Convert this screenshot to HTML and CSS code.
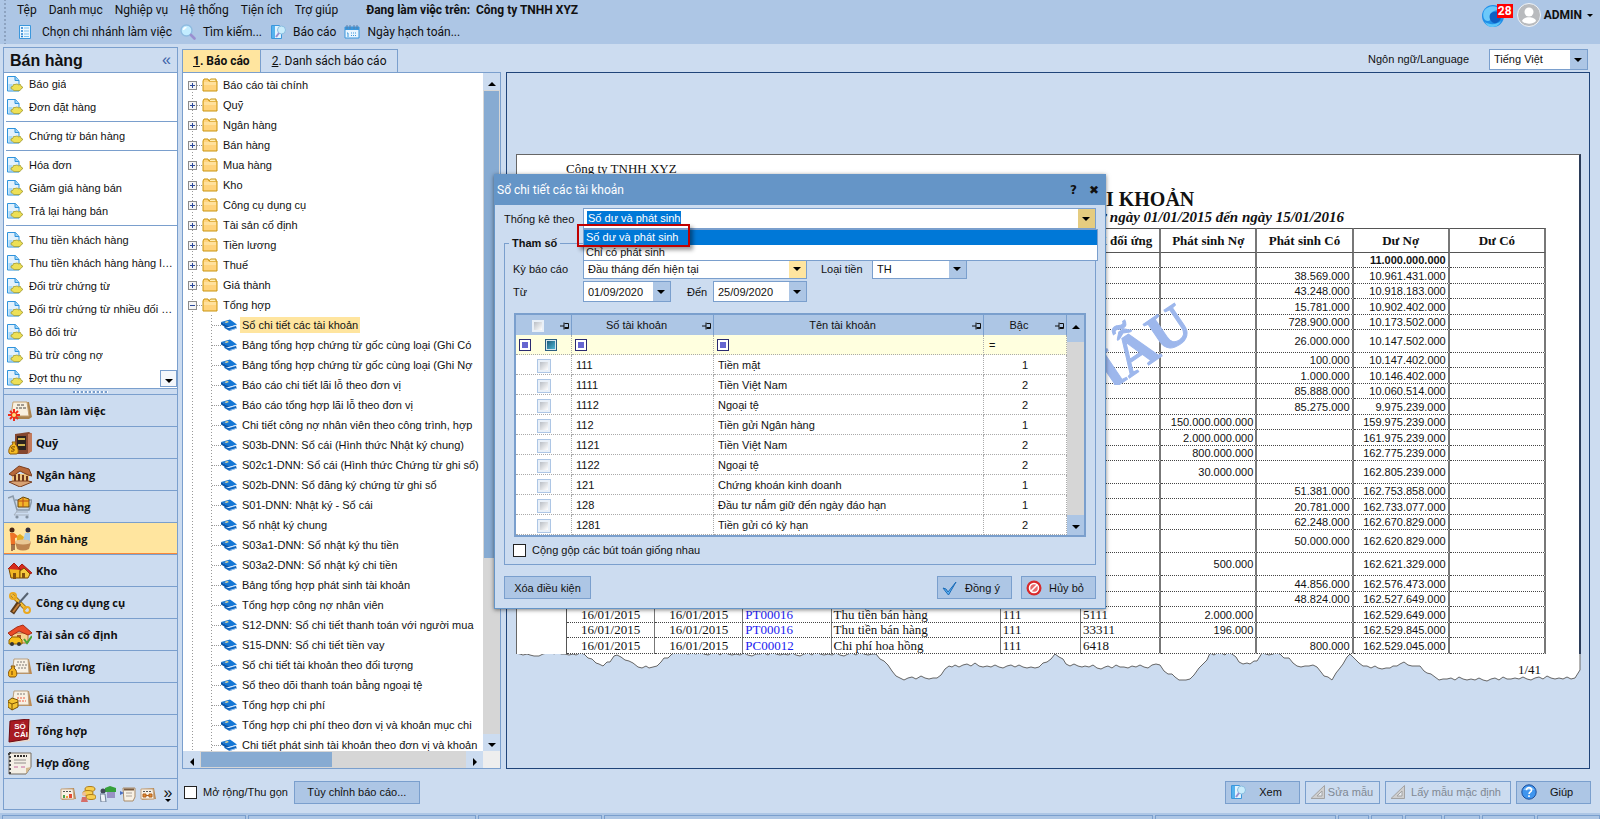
FILE: index.html
```html
<!DOCTYPE html>
<html lang="vi">
<head>
  <meta charset="UTF-8">
  <meta name="viewport" content="width=device-width, initial-scale=1">
  <title>Báo cáo - Công ty TNHH XYZ</title>
  <link rel="stylesheet" href="styles.css">
</head>
<body>

  <!-- icons -->
  <svg class="sprite" aria-hidden="true">
    <symbol id="i-list" viewBox="0 0 16 16"><path d="M2.500 1.500h11v13h-11z" fill="#eaf6ff" stroke="#3b97dc"/><path d="M4 4h2M4 7h2M4 10h2M4 12.500h2" stroke="#1f7fd0" stroke-width="1.500"/><path d="M7 4h5M7 7h5M7 10h5M7 12.500h5" stroke="#7cc1f0"/></symbol>
    <symbol id="i-search" viewBox="0 0 16 16"><circle cx="6.500" cy="6.500" r="5.500" fill="#c2ecff" stroke="#8fbbe0" stroke-width="1.400"/><path d="M3.500 6a3 3 0 0 1 3-2.500" stroke="#fff" stroke-width="1.500" fill="none"/><path d="M11 11l3.500 3.500" stroke="#9a8fd0" stroke-width="2.600" stroke-linecap="round"/></symbol>
    <symbol id="i-report" viewBox="0 0 16 16"><path d="M1.500 1.500h8l2 2v11h-10z" fill="#e2f4ff" stroke="#3b97dc"/><path d="M2 2h3v12H2z" fill="#55b2ee"/><circle cx="11.500" cy="6" r="4" fill="#c9ecfb" stroke="#8abde0"/><path d="M9 9l-3 4" stroke="#9a8fd0" stroke-width="2"/></symbol>
    <symbol id="i-cal" viewBox="0 0 16 16"><path d="M1 3h14v11H1z" fill="#eaf6ff" stroke="#3b97dc"/><path d="M1 3h14v3H1z" fill="#3b97dc"/><path d="M3 1v4M6 1v4M10 1v4M13 1v4" stroke="#5c7fa8"/><path d="M3 9h1v4M7 9h1m1 0h1m1 0h1M7 11.500h1m1 0h1m1 0h1" stroke="#3b97dc" fill="none"/></symbol>
    <symbol id="i-doc" viewBox="0 0 16 16"><path d="M.500.500h8l3.500 4v10.500H.500z" fill="#e2f1fd" stroke="#2f93dc"/><path d="M8 .500v4h4" fill="#9ad2f7" stroke="#2f93dc"/><path d="M1.500 8h4v6h-4z" fill="#a9d8f7"/><path d="M4 11l2-.800.500-1.700h1.500L10 8l1.500.800 2-.300.500 1.700 1.700.800-.700 1.500-1.500.800-.500 1.300H7l-1.500-1.300-1.300-.500z" fill="#ede056" stroke="#a39a2c" stroke-width=".800"/></symbol>
    <symbol id="i-folder" viewBox="0 0 16 14"><path d="M1 3l1-2h4l1 2h8v10H1z" fill="#ffd37c" stroke="#c9940e"/><path d="M7 3l1.500-2H14v2" fill="#fff0b8" stroke="#c9940e"/><path d="M2 4h12v3H2z" fill="#ffe09c"/></symbol>
    <symbol id="i-book" viewBox="0 0 16 12"><path d="M0 3L9 .500l7 5L8 8z" fill="#1477d6"/><path d="M0 3v2.500L4 8l4 0v-.500z" fill="#0a56a8"/><path d="M8 8l7.500-2v1L9 9z" fill="#cfe6fb"/><path d="M3 7.500l5 1.500 7-2 .800 2.500L8.500 12 3.500 9z" fill="#0f66c0"/><path d="M8.500 11l7-2v.800l-7 2z" fill="#bcdcf8"/><path d="M3.500 3l3-.900L8 3l-3 1z" fill="#f0dc93"/></symbol>
    <symbol id="i-pin" viewBox="0 0 10 8"><path d="M0 4h4M4 .500v7M4.500 1.500h4v5h-4M4.500 5.500h4" stroke="#111" fill="none"/></symbol>
    <symbol id="i-check" viewBox="0 0 16 14"><path d="M1 7l3 1 2 3 8-10-7.500 13L4 11z" fill="#5cb0f2" stroke="#1c6cb8"/></symbol>
    <symbol id="i-stop" viewBox="0 0 16 16"><circle cx="8" cy="8" r="7.500" fill="#d8292b"/><circle cx="8" cy="8" r="4.500" fill="#e9696b" stroke="#fff" stroke-width="1.500"/><path d="M5 11l6-6" stroke="#fff" stroke-width="1.600"/></symbol>
    <symbol id="i-ruler" viewBox="0 0 16 16"><path d="M1 14.500L14.500 1.500v13z" fill="#cfcfcf" stroke="#a3a3a3"/><path d="M7 12l5-5v5z" fill="#e8edf3" stroke="#a3a3a3"/></symbol>
    <symbol id="i-help" viewBox="0 0 16 16"><circle cx="8" cy="8" r="7.200" fill="#3f95ee" stroke="#1c4f9c"/><path d="M2.500 6a6 5 0 0 1 11 0z" fill="#85c0f8"/><path d="M5.500 6.200c0-3.600 5.200-3.200 5 0 0 1.800-2.400 1.800-2.400 3.800M8 11.300v1.700" stroke="#fff" stroke-width="1.600" fill="none"/></symbol>
    <symbol id="i-globe" viewBox="0 0 22 22"><circle cx="11" cy="11" r="11" fill="#1f8fe8"/><path d="M2 6c4-6 13-6 16-1-5 0-8 1-9 4s1 7-3 7-6-5-4-10z" fill="#6cc9fa"/><path d="M9 8c4-2 9-2 10 2s-3 9-7 8-6-7-3-10z" fill="#0f5fc2"/><path d="M3 17c4 3 12 3 16-1-2 5-6 6-9 6s-6-2-7-5z" fill="#5cc6fa"/></symbol>
    <symbol id="i-user" viewBox="0 0 24 24"><circle cx="12" cy="12" r="11.500" fill="#b9bbbe" stroke="#eef3f9"/><circle cx="12" cy="9" r="4.500" fill="#fff"/><path d="M5 18c1-5 13-5 14 0-3 3.500-11 3.500-14 0z" fill="#fff"/></symbol>

    <symbol id="n-desk" viewBox="0 0 24 24"><path d="M7 3h14l3 15-3 2H5z" fill="#a9834f"/><path d="M5 3h14l2 14H3z" fill="#f8f0df" stroke="#c5a170"/><path d="M9 6h7M8 9h2m1 0h3m1 0h3" stroke="#4b4540" stroke-dasharray="3 1"/><path d="M6 10v12M0 16h12M2 12l8 8M10 12l-8 8" stroke="#ef2d19" stroke-width="2"/><circle cx="6" cy="16" r="2" fill="#ffdf7a"/></symbol>
    <symbol id="n-safe" viewBox="0 0 24 24"><path d="M7 3l14-2 3 2v17l-5 3H7z" fill="#85472f"/><path d="M20 3l4-1v18l-4 3z" fill="#c37a5b"/><path d="M9 5h9v14H9z" fill="#2d2320"/><path d="M10 8h7M10 14h7" stroke="#cfb34d" stroke-width="2"/><path d="M4 11h4l-1 2c3 2 5 10 1 10H2c-3-2 0-9 3-10z" fill="#f6bb22" stroke="#8f5c0a"/><path d="M7 16c-5-1-4 2-2 2s2 3-2 2" stroke="#6c3a00" fill="none"/></symbol>
    <symbol id="n-bank" viewBox="0 0 24 24"><path d="M4 11h17v9H4z" fill="#eec480"/><path d="M1 11L11 3l10 3 3 7-4-1-8-4-7 5z" fill="#b8693a" stroke="#7a3d1d"/><path d="M7 12v8M11 11v9M15 12v9M19 13v7" stroke="#70351a" stroke-width="2"/><path d="M1 19l11 5 12-5-4-1H5z" fill="#d8a273" stroke="#7a3d1d"/></symbol>
    <symbol id="n-cart" viewBox="0 0 24 24"><path d="M0 3l5-2 4 14h12l3-10H7" fill="#cdd7e2" stroke="#8a9aab" stroke-width="1.500"/><path d="M10 5l5-3 6 2v8H10z" fill="#f2b429" stroke="#6b4708"/><path d="M10 6h11M15 3v9" stroke="#bc4c17"/><path d="M10 15l-4 5h15M8 17h12" stroke="#a5b0bd" fill="none"/><circle cx="9" cy="22" r="1.600" fill="#8391a0"/><circle cx="19" cy="22" r="1.600" fill="#8391a0"/></symbol>
    <symbol id="n-sell" viewBox="0 0 24 24"><circle cx="4" cy="3" r="2.500" fill="#4b2713"/><path d="M2 6h4l5 4-4 1v7H3z" fill="#ee7327"/><path d="M4 17v7M6 17v6" stroke="#875031" stroke-width="1.500"/><circle cx="20" cy="3" r="2.500" fill="#342c37"/><path d="M17 6h5v8h-7z" fill="#a4cbe8"/><path d="M9 9l3-2 4 3-2 5H9z" fill="#e2ad20"/><path d="M7 15c4-3 12-3 16 0l-2 7c-4 2-8 2-12 0z" fill="#bd8450"/><ellipse cx="15" cy="15" rx="8" ry="2.500" fill="#e9c795"/></symbol>
    <symbol id="n-store" viewBox="0 0 24 24"><path d="M1 10l5-4 6 5v8H3z" fill="#f1b724" stroke="#7c4b00"/><path d="M0 10l6-6 7 7M10 9l4-4 10 9-3 1z" fill="#d52b1d" stroke="#a51c12"/><path d="M12 12l4-3 6 6-2 4h-8z" fill="#f6ca3e" stroke="#7c4b00"/><path d="M5 14h3v6H5zM14 14h3v5h-3z" fill="#825110"/></symbol>
    <symbol id="n-tools" viewBox="0 0 24 24"><path d="M4 4l14 14" stroke="#8a6210" stroke-width="4"/><path d="M4 4l14 14" stroke="#f4bd35" stroke-width="2.500"/><circle cx="5" cy="5" r="3" fill="none" stroke="#eaa81e" stroke-width="2"/><circle cx="19" cy="19" r="3" fill="none" stroke="#eaa81e" stroke-width="2"/><path d="M20 2l-9 10" stroke="#566270" stroke-width="2"/><path d="M11 12l-7 10" stroke="#5b3b1b" stroke-width="5"/><path d="M11 13l-6 8" stroke="#c4803a" stroke-width="2"/></symbol>
    <symbol id="n-asset" viewBox="0 0 24 24"><path d="M4 10h16v10H4z" fill="#f6d18f" stroke="#b9702f"/><path d="M0 10l9-6 6-2 9 8-4 2-9-4-8 5z" fill="#ea4b27" stroke="#a52d16"/><path d="M9 12h4v6H9z" fill="#a8562c"/><path d="M1 17l3-3h7l3 3v4H1z" fill="#f6be1c" stroke="#8c6200"/><circle cx="4" cy="21" r="2" fill="#333"/><circle cx="11" cy="21" r="2" fill="#333"/><path d="M16 16l3 4 5-7" stroke="#48a536" stroke-width="2" fill="none"/></symbol>
    <symbol id="n-pay" viewBox="0 0 24 24"><path d="M6 4h15l3 15H4z" fill="#bd8b52"/><path d="M6 4h14l1 14H4z" fill="#f8f1e4" stroke="#b9a080"/><path d="M9 7h9M8 10h11M10 13h8" stroke="#7e7974" stroke-dasharray="2 1"/><path d="M3 11h4l-1 2c3 2 4 8 1 9H2c-3-1-2-7 2-9z" fill="#f2b21e" stroke="#855307"/><path d="M4 16v4" stroke="#6c3a00"/></symbol>
    <symbol id="n-cost" viewBox="0 0 24 24"><path d="M6 4h15l3 15H4z" fill="#bd8b52"/><path d="M6 4h14l1 14H4z" fill="#f8f1e4" stroke="#b9a080"/><path d="M9 7h9" stroke="#7e7974" stroke-dasharray="2 1"/><path d="M9 11h9M11 14h7" stroke="#ed5c42" stroke-dasharray="2 1"/><path d="M0 14l4-3 6 2v7l-6 3-4-3z" fill="#f4c431" stroke="#7a5204"/><path d="M0 15l4 2 6-2M4 17v6" stroke="#7a5204" fill="none"/></symbol>
    <symbol id="n-ledger" viewBox="0 0 24 24"><path d="M3 2l18-2 2 3-1 19-20 2z" fill="#ead7c8"/><path d="M2 2l19-2-1 20-19 3z" fill="#a81b22" stroke="#6d0b12"/><text x="12" y="10" class="ledger-text">SỔ</text><text x="13" y="18" class="ledger-text">CÁI</text></symbol>
    <symbol id="n-contract" viewBox="0 0 24 24"><path d="M1 2h22v14l-5 7H1z" fill="#f4efe5" stroke="#756d63"/><path d="M18 23v-6l5-1z" fill="#d5b98f"/><path d="M6 5h13" stroke="#332e2c" stroke-dasharray="2 1" stroke-width="2"/><path d="M6 9h12M6 12h12" stroke="#938e8c"/><path d="M6 16h4M13 16h4" stroke="#c868a0"/><path d="M2 1v22M0 3h4" stroke="#444" stroke-width="2" stroke-dasharray="2 2"/></symbol>
    <symbol id="t-chart" viewBox="0 0 16 16"><path d="M1 3l13-1 2 11-14 1z" fill="#b98a56"/><path d="M1 3h12l1 10H1z" fill="#f8f1e4" stroke="#c5a581"/><path d="M3 5.500h8" stroke="#555" stroke-dasharray="2 1"/><path d="M3 12V9h2v3z" fill="#4aa04a"/><path d="M6 12v-2h2v2z" fill="#e9a33a"/><path d="M9 12V8h3v4z" fill="#e34b35"/></symbol>
    <symbol id="t-coins" viewBox="0 0 16 16"><ellipse cx="10" cy="3" rx="5" ry="2.500" fill="#f8cf51" stroke="#af7c17"/><ellipse cx="8" cy="7" rx="5" ry="2.500" fill="#f8cf51" stroke="#af7c17"/><ellipse cx="11" cy="11" rx="5" ry="2.500" fill="#f8cf51" stroke="#af7c17"/><circle cx="4" cy="8" r="2" fill="#efbf98"/><path d="M1 16l1-5h4l2 5z" fill="#d66e69"/></symbol>
    <symbol id="t-shop" viewBox="0 0 16 16"><path d="M5 2l5-2 6 2v4H5z" fill="#36a13b"/><path d="M7 6h8v6H7z" fill="#9991c5"/><circle cx="3" cy="5" r="2.500" fill="#434b59"/><path d="M0 8h5l1 8H1z" fill="#edf1f7" stroke="#6b7d94"/></symbol>
    <symbol id="t-note" viewBox="0 0 16 16"><path d="M3 2h12v9l-2 4H4z" fill="#f8f1e4" stroke="#a98b68"/><path d="M4 3.500h10" stroke="#7a5c40" stroke-width="2"/><path d="M6 7h6M6 10h6" stroke="#aaa29a"/><path d="M0 5l4 2-4 2z" fill="#4b6fc0"/></symbol>
    <symbol id="t-link" viewBox="0 0 16 16"><path d="M1 3l13-1 2 11-14 1z" fill="#b98a56"/><path d="M1 3h12l1 10H1z" fill="#f8f1e4" stroke="#c5a581"/><path d="M3 5.500h8" stroke="#555" stroke-dasharray="2 1"/><path d="M3 8h3v3H3zM9 8h3v3H9zM6 9.500h3" fill="#e08b35" stroke="#b3601b"/></symbol>
  </svg>

  <header class="topbar">
    <div class="strips">
      <nav class="menu">
        <a href="#">Tệp</a><a href="#">Danh mục</a><a href="#">Nghiệp vụ</a><a href="#">Hệ thống</a><a href="#">Tiện ích</a><a href="#">Trợ giúp</a>
        <strong>Đang làm việc trên: &nbsp;Công ty TNHH XYZ</strong>
      </nav>
      <div class="toolbar">
        <button><svg><use href="#i-list"/></svg><span>Chọn chi nhánh làm việc</span></button>
        <button><svg><use href="#i-search"/></svg><span>Tìm kiếm...</span></button>
        <button><svg><use href="#i-report"/></svg><span>Báo cáo</span></button>
        <button><svg><use href="#i-cal"/></svg><span>Ngày hạch toán...</span></button>
      </div>
    </div>
    <div class="account">
      <div class="notify"><svg><use href="#i-globe"/></svg><span class="badge">28</span></div>
      <svg class="avatar"><use href="#i-user"/></svg>
      <button class="user">ADMIN <i class="caret"></i></button>
    </div>
  </header>

  <div class="workspace">

    <aside class="sidebar">
      <div class="side-title"><h1>Bán hàng</h1><button aria-label="Thu gọn">«</button></div>
      <div class="side-list">
        <div id="tasks"></div>
        <button class="more" aria-label="Xem thêm"><i class="caret"></i></button>
      </div>
      <div class="splitter"></div>
      <nav class="modules" id="modules"></nav>
      <div class="tray">
        <svg><use href="#t-chart"/></svg><svg><use href="#t-coins"/></svg><svg><use href="#t-shop"/></svg><svg><use href="#t-note"/></svg><svg><use href="#t-link"/></svg>
        <button aria-label="Khác">»<i class="caret"></i></button>
      </div>
    </aside>

    <main class="main">
      <div class="columns">
        <section class="reports">
          <div class="tabs">
            <button class="tab active"><u>1</u>. Báo cáo</button>
            <button class="tab"><u>2</u>. Danh sách báo cáo</button>
          </div>
          <div class="tree-box">
            <ul class="tree" id="tree"></ul>
            <div class="vscroll"><button class="up" aria-label="Lên"><i class="caret"></i></button><div class="thumb"></div><button aria-label="Xuống"><i class="caret"></i></button></div>
            <div class="hscroll"><button class="left" aria-label="Trái"><i class="caret"></i></button><div class="thumb"></div><button class="right" aria-label="Phải"><i class="caret"></i></button></div>
            <div class="corner"></div>
          </div>
        </section>

        <section class="preview-col">
          <div class="language">
            <label for="lang">Ngôn ngữ/Language</label>
            <span class="combo lang"><select id="lang"><option>Tiếng Việt</option></select></span>
          </div>
          <div class="preview">
            <div class="paper">
              <p class="company">Công ty TNHH XYZ</p>
              <h2>SỔ CHI TIẾT CÁC TÀI KHOẢN</h2>
              <p class="period">Từ ngày 01/01/2015 đến ngày 15/01/2016</p>
              <table class="ledger">
                <colgroup><col class="w-date"><col class="w-date"><col class="w-date"><col class="w-desc"><col class="w-acc"><col class="w-acc"><col class="w-num"><col class="w-num"><col class="w-num"><col class="w-num"></colgroup>
                <thead><tr><th></th><th></th><th></th><th></th><th></th><th>TK đối ứng</th><th>Phát sinh Nợ</th><th>Phát sinh Có</th><th>Dư Nợ</th><th>Dư Có</th></tr></thead>
                <tbody id="ledger"></tbody>
              </table>
              <svg class="watermark" viewBox="0 0 200 160"><text x="188" y="108" transform="rotate(-34 188 108)">MẪU</text></svg>
              <span class="pageno">1/41</span>
            </div>
            <svg class="torn" viewBox="516 650 1065 32" preserveAspectRatio="none"><path id="torn"/></svg>
          </div>
        </section>
      </div>

      <footer class="actions">
        <label class="tick"><input type="checkbox"> Mở rộng/Thu gọn</label>
        <button class="btn wide">Tùy chỉnh báo cáo...</button>
        <span class="spacer"></span>
        <button class="btn"><svg><use href="#i-report"/></svg><span>Xem</span></button>
        <button class="btn" disabled><svg><use href="#i-ruler"/></svg><span>Sửa mẫu</span></button>
        <button class="btn wide" disabled><svg><use href="#i-ruler"/></svg><span>Lấy mẫu mặc định</span></button>
        <button class="btn"><svg><use href="#i-help"/></svg><span>Giúp</span></button>
      </footer>
    </main>
  </div>

  <div class="statusbar"><span></span><span></span><span></span><span></span><span></span><span></span><span></span><span></span><span></span><span></span><span></span></div>

  <div class="dialog" role="dialog" aria-labelledby="dlg-title">
    <div class="dlg-title"><h2 id="dlg-title">Sổ chi tiết các tài khoản</h2><button aria-label="Trợ giúp">?</button><button aria-label="Đóng">✖</button></div>
    <div class="dlg-body">
      <div class="stat-row">
        <label for="stat">Thống kê theo</label>
        <span class="combo stat open">
          <select id="stat"><option>Số dư và phát sinh</option><option>Chỉ có phát sinh</option></select>
          <ul class="options"><li class="on">Số dư và phát sinh</li><li>Chỉ có phát sinh</li></ul>
          <i class="marker"></i>
        </span>
      </div>
      <fieldset>
        <legend>Tham số</legend>
        <div class="field-row">
          <label for="period">Kỳ báo cáo</label>
          <span class="combo hot period-box"><select id="period"><option>Đầu tháng đến hiện tại</option></select></span>
          <label for="cur" class="cur-label">Loại tiền</label>
          <span class="combo cur"><select id="cur"><option>TH</option></select></span>
        </div>
        <div class="field-row">
          <label for="from">Từ</label>
          <span class="combo date"><input id="from" type="text" value="01/09/2020"></span>
          <label for="to" class="to-label">Đến</label>
          <span class="combo date to"><input id="to" type="text" value="25/09/2020"></span>
        </div>
        <div class="grid">
          <table>
            <colgroup><col class="g-check"><col class="g-acc"><col><col class="g-level"></colgroup>
            <thead>
              <tr>
                <th><input type="checkbox" class="soft" aria-label="Chọn tất cả"><svg><use href="#i-pin"/></svg></th>
                <th>Số tài khoản<svg><use href="#i-pin"/></svg></th>
                <th>Tên tài khoản<svg><use href="#i-pin"/></svg></th>
                <th>Bậc<svg><use href="#i-pin"/></svg></th>
              </tr>
              <tr class="filter">
                <td><i class="op"></i><i class="tri"></i></td><td><i class="op"></i></td><td><i class="op"></i></td><td><b>=</b></td>
              </tr>
            </thead>
            <tbody id="accounts"></tbody>
          </table>
          <div class="grid-scroll"><button class="up" aria-label="Lên"><i class="caret"></i></button><div class="thumb"></div><button aria-label="Xuống"><i class="caret"></i></button></div>
        </div>
        <label class="tick"><input type="checkbox"> Cộng gộp các bút toán giống nhau</label>
      </fieldset>
      <div class="dlg-actions">
        <button class="btn clear">Xóa điều kiện</button>
        <span class="spacer"></span>
        <button class="btn"><svg><use href="#i-check"/></svg><span>Đồng ý</span></button>
        <button class="btn"><svg><use href="#i-stop"/></svg><span>Hủy bỏ</span></button>
      </div>
    </div>
  </div>

  <script>
    // "-" là đường kẻ phân cách
    const tasks = ["Báo giá", "Đơn đặt hàng", "-", "Chứng từ bán hàng", "-", "Hóa đơn", "Giảm giá hàng bán", "Trả lại hàng bán", "-",
      "Thu tiền khách hàng", "Thu tiền khách hàng hàng loạt", "Đối trừ chứng từ", "Đối trừ chứng từ nhiều đối tượng", "Bỏ đối trừ", "Bù trừ công nợ", "Đợt thu nợ"];

    document.getElementById("tasks").innerHTML = tasks.map(t =>
      t === "-" ? "<hr>" : `<a href="#"><svg><use href="#i-doc"/></svg><span>${t}</span></a>`).join("");

    const modules = [["desk", "Bàn làm việc"], ["safe", "Quỹ"], ["bank", "Ngân hàng"], ["cart", "Mua hàng"], ["sell", "Bán hàng"], ["store", "Kho"],
      ["tools", "Công cụ dụng cụ"], ["asset", "Tài sản cố định"], ["pay", "Tiền lương"], ["cost", "Giá thành"], ["ledger", "Tổng hợp"], ["contract", "Hợp đồng"]];

    document.getElementById("modules").innerHTML = modules.map(([icon, name]) =>
      `<a href="#"${icon === "sell" ? ' class="active"' : ""}><svg><use href="#n-${icon}"/></svg>${name}</a>`).join("");

    const folders = ["Báo cáo tài chính", "Quỹ", "Ngân hàng", "Bán hàng", "Mua hàng", "Kho", "Công cụ dụng cụ", "Tài sản cố định", "Tiền lương", "Thuế", "Giá thành", "Tổng hợp"];
    const books = ["Sổ chi tiết các tài khoản", "Bảng tổng hợp chứng từ gốc cùng loại (Ghi Có", "Bảng tổng hợp chứng từ gốc cùng loại (Ghi Nợ",
      "Báo cáo chi tiết lãi lỗ theo đơn vị", "Báo cáo tổng hợp lãi lỗ theo đơn vị", "Chi tiết công nợ nhân viên theo công trình, hợp",
      "S03b-DNN: Sổ cái (Hình thức Nhật ký chung)", "S02c1-DNN: Sổ cái (Hình thức Chứng từ ghi sổ)", "S02b-DNN: Sổ đăng ký chứng từ ghi sổ",
      "S01-DNN: Nhật ký - Sổ cái", "Sổ nhật ký chung", "S03a1-DNN: Sổ nhật ký thu tiền", "S03a2-DNN: Sổ nhật ký chi tiền",
      "Bảng tổng hợp phát sinh tài khoản", "Tổng hợp công nợ nhân viên", "S12-DNN: Sổ chi tiết thanh toán với người mua",
      "S15-DNN: Sổ chi tiết tiền vay", "Sổ chi tiết tài khoản theo đối tượng", "Sổ theo dõi thanh toán bằng ngoại tệ", "Tổng hợp chi phí",
      "Tổng hợp chi phí theo đơn vị và khoản mục chi", "Chi tiết phát sinh tài khoản theo đơn vị và khoản"];

    document.getElementById("tree").innerHTML = folders.map((f, i) => {
      const open = i === folders.length - 1;
      const kids = open ? "<ul>" + books.map((b, k) =>
        `<li class="leaf"><i class="dots"></i><svg><use href="#i-book"/></svg><span${k ? "" : ' class="current"'}>${b}</span></li>`).join("") + "</ul>" : "";
      return `<li><div class="node"><i class="box${open ? " open" : ""}"></i><i class="dots"></i><svg><use href="#i-folder"/></svg><span>${f}</span></div>${kids}</li>`;
    }).join("");

    const accounts = [["111", "Tiền mặt", 1], ["1111", "Tiền Việt Nam", 2], ["1112", "Ngoại tệ", 2], ["112", "Tiền gửi Ngân hàng", 1],
      ["1121", "Tiền Việt Nam", 2], ["1122", "Ngoại tệ", 2], ["121", "Chứng khoán kinh doanh", 1], ["128", "Đầu tư nắm giữ đến ngày đáo hạn", 1], ["1281", "Tiền gửi có kỳ hạn", 2]];

    document.getElementById("accounts").innerHTML = accounts.map(([no, name, level]) =>
      `<tr><td><input type="checkbox" class="soft" aria-label="${no}"></td><td>${no}</td><td>${name}</td><td>${level}</td></tr>`).join("");

    // phát sinh nợ, phát sinh có, dư nợ, [các cột chữ]
    const ledger = [["", "", "11.000.000.000"], ["", "38.569.000", "10.961.431.000"], ["", "43.248.000", "10.918.183.000"], ["", "15.781.000", "10.902.402.000"],
      ["", "728.900.000", "10.173.502.000"], ["", "26.000.000", "10.147.502.000"], ["", "100.000", "10.147.402.000"], ["", "1.000.000", "10.146.402.000"],
      ["", "85.888.000", "10.060.514.000"], ["", "85.275.000", "9.975.239.000"], ["150.000.000.000", "", "159.975.239.000"], ["2.000.000.000", "", "161.975.239.000"],
      ["800.000.000", "", "162.775.239.000"], ["30.000.000", "", "162.805.239.000"], ["", "51.381.000", "162.753.858.000"], ["", "20.781.000", "162.733.077.000"],
      ["", "62.248.000", "162.670.829.000"], ["", "50.000.000", "162.620.829.000"], ["500.000", "", "162.621.329.000"], ["", "44.856.000", "162.576.473.000"],
      ["", "48.824.000", "162.527.649.000"],
      ["2.000.000", "", "162.529.649.000", ["16/01/2015", "16/01/2015", "PT00016", "Thu tiền bán hàng", "111", "5111"]],
      ["196.000", "", "162.529.845.000", ["16/01/2015", "16/01/2015", "PT00016", "Thu tiền bán hàng", "111", "33311"]],
      ["", "800.000", "162.529.045.000", ["16/01/2015", "16/01/2015", "PC00012", "Chi phí hoa hồng", "111", "6418"]]];
    const tall = [5, 13, 17, 18];

    document.getElementById("ledger").innerHTML = ledger.map(([debit, credit, balance, text], i) => {
      const cells = (text || ["", "", "", "", "", ""]).concat([debit, credit, balance, ""]);
      return `<tr${tall.includes(i) ? ' class="tall"' : ""}>` + cells.map(c => `<td>${c}</td>`).join("") + "</tr>";
    }).join("");

    // mép giấy rách: nối các điểm chính bằng nét răng cưa nhỏ
    const edge = [[516,652],[530,654],[547,652],[565,653],[584,653],[592,658],[603,665],[617,654],[633,662],[638,666],[653,666],[672,653],[680,652],[760,653],[876,653],
      [884,660],[892,670],[900,677],[937,677],[949,665],[955,664],[1039,666],[1055,653],[1070,665],[1120,666],[1160,664],[1168,673],[1182,679],[1190,678],[1203,663],
      [1210,652],[1232,653],[1243,663],[1257,660],[1262,652],[1280,653],[1297,665],[1313,664],[1332,679],[1340,667],[1350,653],[1363,665],[1390,667],[1400,663],
      [1420,665],[1427,672],[1443,678],[1575,677],[1580,669]];
    const steps = [0, 1, -1, 1, 2, 0, -1, 1, -2, 0, 1];
    let d = "M516 650 L516 652";
    let s = 0;
    for (let i = 1; i < edge.length; i++) {
      const [x0, y0] = edge[i - 1], [x1, y1] = edge[i];
      const n = Math.max(1, Math.round((x1 - x0) / 4));
      for (let k = 1; k <= n; k++) {
        const wob = k < n ? steps[s++ % steps.length] : 0;
        d += ` L${Math.round(x0 + (x1 - x0) * k / n)} ${Math.round(y0 + (y1 - y0) * k / n + wob)}`;
      }
    }
    document.getElementById("torn").setAttribute("d", d + " L1580 650");
  </script>

</body>
</html>
```

FILE: styles.css
```css
* {
  box-sizing: border-box;
}

body {
  margin: 0;
  height: 100vh;
  display: flex;
  flex-direction: column;
  overflow: hidden;
  background: #ccdcf0;
  color: #111;
  font: 11px/16px "Liberation Sans", sans-serif;
}

h1, h2, p, ul {
  margin: 0;
  padding: 0;
}

ul {
  list-style: none;
}

a {
  color: inherit;
  text-decoration: none;
}

button, input, select {
  font: inherit;
  color: inherit;
  border: 0;
  padding: 0;
  margin: 0;
  border-radius: 0;
  background: none;
}

button {
  white-space: nowrap;
}

svg {
  flex: none;
}

.sprite {
  position: absolute;
  width: 0;
  height: 0;
}

.ledger-text {
  font: bold 8px "Liberation Sans", sans-serif;
  fill: #fff;
  text-anchor: middle;
}

.caret {
  display: inline-block;
  border: 4px solid transparent;
  border-top-color: #000;
  border-bottom: 0;
}

.up .caret {
  transform: rotate(180deg);
}

.left .caret {
  transform: rotate(90deg);
}

.right .caret {
  transform: rotate(-90deg);
}

.spacer {
  flex: 1;
}

/* top bar */
.topbar {
  display: flex;
  justify-content: space-between;
  height: 44px;
  background: #adc6e5;
  font: 12px/20px Roboto, sans-serif;
}

.strips {
  padding-left: 17px;
  background: radial-gradient(circle, #8da3c0 1px, transparent 1px) 3px 2px / 4px 4px repeat-y;
}

.menu {
  display: flex;
  gap: 12px;
  height: 21px;
}

.menu strong {
  margin-left: 16px;
}

.toolbar {
  display: flex;
  gap: 8px;
  height: 22px;
}

.toolbar button {
  display: flex;
  align-items: center;
  gap: 7px;
}

.toolbar button:first-child {
  gap: 9px;
}

.toolbar svg {
  width: 16px;
  height: 16px;
}

.account {
  display: flex;
  align-items: flex-start;
  gap: 3px;
  padding: 3px 7px 0 0;
}

.notify {
  position: relative;
  width: 32px;
}

.notify svg {
  display: block;
  width: 22px;
  height: 22px;
  margin-top: 2px;
}

.badge {
  position: absolute;
  left: 15px;
  top: 1px;
  width: 16px;
  background: #f00;
  color: #fff;
  font-weight: bold;
  font-size: 12px;
  line-height: 14px;
  text-align: center;
}

.avatar {
  width: 24px;
  height: 24px;
}

.user {
  display: flex;
  align-items: center;
  gap: 5px;
  height: 24px;
  font-weight: bold;
}

.user .caret {
  border-width: 3px 3px 0;
}

/* work area */
.workspace {
  flex: 1;
  min-height: 0;
  display: flex;
  padding-left: 3px;
}

.sidebar {
  width: 175px;
  margin: 3px 4px 3px 0;
  border: 1px solid #7a9fcd;
  display: flex;
  flex-direction: column;
}

.side-title {
  display: flex;
  justify-content: space-between;
  height: 25px;
  padding: 0 6px;
  border-bottom: 1px solid #7a9fcd;
}

.side-title h1 {
  font-size: 16px;
  line-height: 26px;
}

.side-title button {
  color: #3d62a8;
  font-size: 16px;
}

.side-list {
  position: relative;
  flex: 1;
  min-height: 0;
  overflow: hidden;
  background: #fff;
}

.side-list a {
  display: flex;
  align-items: center;
  gap: 6px;
  height: 23px;
  padding: 0 4px 2px 3px;
}

.side-list a svg {
  width: 16px;
  height: 16px;
}

.side-list a span {
  overflow: hidden;
  white-space: nowrap;
  text-overflow: ellipsis;
}

.side-list hr {
  margin: 2px 0 3px 2px;
  border: 0;
  border-top: 1px solid #7a9fcd;
}

.more {
  position: absolute;
  right: 0;
  bottom: 1px;
  width: 17px;
  height: 17px;
  border: 1px solid #7a9fcd;
  background: #f4f7fb;
  line-height: 8px;
}

.splitter {
  height: 6px;
  border-top: 1px solid #7a9fcd;
  background: repeating-linear-gradient(to right, #7a9fcd 0 2px, #fff 2px 3px, transparent 3px 4px) center 2px / 35px 2px no-repeat;
}

.modules a {
  display: flex;
  align-items: center;
  gap: 4px;
  height: 32px;
  padding-left: 4px;
  border-top: 1px solid #7a9fcd;
  font: bold 11px/20px "Open Sans", sans-serif;
}

.modules a.active {
  background: #ffe59f;
  box-shadow: inset 0 -1px #f8873a;
}

.modules svg {
  width: 24px;
  height: 24px;
}

.tray {
  display: flex;
  justify-content: flex-end;
  align-items: center;
  gap: 4px;
  height: 31px;
  padding-right: 3px;
  border-top: 1px solid #7a9fcd;
}

.tray svg {
  width: 16px;
  height: 16px;
}

.tray button {
  display: flex;
  flex-direction: column;
  align-items: center;
  width: 12px;
  margin-left: 2px;
  font-size: 16px;
  line-height: 12px;
}

.tray .caret {
  border-width: 3px 3px 0;
}

.main {
  flex: 1;
  min-width: 0;
  display: flex;
  flex-direction: column;
}

.columns {
  flex: 1;
  min-height: 0;
  display: flex;
  gap: 5px;
  padding: 5px 10px 0 0;
}

.reports {
  width: 319px;
  display: flex;
  flex-direction: column;
}

.tabs {
  display: flex;
  height: 23px;
}

.tab {
  padding: 0 11px;
  border: 1px solid #7a9fcd;
  border-left: 0;
  border-bottom: 0;
  font: 12px/20px Roboto, sans-serif;
}

.tab.active {
  padding: 0 10px;
  border-left: 1px solid #7a9fcd;
  background: #ffe59f;
  font-weight: bold;
}

.tree-box {
  flex: 1;
  min-height: 0;
  display: grid;
  grid-template: minmax(0, 1fr) 17px / minmax(0, 1fr) 17px;
  border: 1px solid #7a9fcd;
  background: #fff;
}

.tree {
  overflow: hidden;
  padding-top: 2px;
  background: repeating-linear-gradient(to bottom, #999 0 1px, transparent 1px 3px) 9px 10px / 1px 100% no-repeat;
}

.node, .leaf {
  display: flex;
  align-items: center;
  height: 20px;
  white-space: nowrap;
}

.node {
  padding-left: 5px;
}

.tree ul {
  background: repeating-linear-gradient(to bottom, #999 0 1px, transparent 1px 3px) 28px 0 / 1px 100% no-repeat;
}

.leaf {
  padding-left: 29px;
}

.box {
  width: 9px;
  height: 9px;
  border: 1px solid #8c8c8c;
  background: linear-gradient(#2b4a9b, #2b4a9b) center / 5px 1px no-repeat, linear-gradient(#2b4a9b, #2b4a9b) center / 1px 5px no-repeat, #f4f4f4;
}

.box.open {
  background: linear-gradient(#2b4a9b, #2b4a9b) center / 5px 1px no-repeat, #f4f4f4;
}

.dots {
  width: 5px;
  border-top: 1px dotted #999;
}

.leaf .dots {
  width: 9px;
}

.node svg {
  width: 16px;
  height: 14px;
  margin-right: 5px;
}

.leaf svg {
  width: 16px;
  height: 12px;
  margin-right: 3px;
}

.leaf span {
  padding: 0 2px;
}

.leaf .current {
  background: #ffe59f;
}

.vscroll, .grid-scroll {
  display: flex;
  flex-direction: column;
  background: #d6d6d6;
}

.vscroll button, .hscroll button {
  width: 17px;
  height: 17px;
  background: #ccdcf0;
  line-height: 8px;
}

.vscroll .thumb {
  height: 467px;
  margin: 1px 1px auto;
  background: #87abd2;
}

.hscroll {
  display: flex;
  background: #d6d6d6;
}

.hscroll .thumb {
  width: 131px;
  margin: 1px auto 1px 1px;
  background: #87abd2;
}

.corner {
  background: #eee;
}

/* report preview */
.preview-col {
  flex: 1;
  min-width: 0;
  display: flex;
  flex-direction: column;
}

.language {
  display: flex;
  justify-content: flex-end;
  align-items: center;
  gap: 20px;
  height: 23px;
  padding: 0 2px 3px 0;
}

.preview {
  flex: 1;
  min-height: 0;
  overflow: hidden;
  padding: 81px 8px 0 9px;
  border: 1px solid #1f4479;
}

.paper {
  position: relative;
  padding: 6px 33px 0 49px;
  border: 1px solid #666;
  border-right: 2px solid #2b3c59;
  border-bottom: 0;
  background: #fff;
  font: 13px/16px "Liberation Serif", serif;
}

.company {
  line-height: 16px;
}

.paper h2 {
  margin: 12px 0 0 -14px;
  font-size: 20px;
  line-height: 20px;
  text-align: center;
}

.period {
  margin: 0 202px 0 0;
  padding-bottom: 3px;
  font-size: 15px;
  font-weight: bold;
  font-style: italic;
  text-align: right;
}

.ledger {
  width: 100%;
  table-layout: fixed;
  border-collapse: separate;
  border-spacing: 0;
  border-left: 1px solid #555;
}

.w-date {
  width: 88px;
}

.w-desc {
  width: 169px;
}

.w-acc {
  width: 80px;
}

.w-num {
  width: 96px;
}

.ledger th {
  height: 25px;
  padding: 0;
  border: 1px solid #555;
  border-left: 0;
  border-right: 2px solid #777;
  white-space: nowrap;
}

.ledger td {
  height: 15px;
  padding: 0 2px;
  border-right: 2px solid #777;
  border-bottom: 1px dotted #444;
  line-height: 14px;
  overflow: hidden;
  white-space: nowrap;
}

.ledger tr:nth-child(even) td {
  height: 16px;
}

.ledger tr.tall:nth-child(n) td {
  height: 23px;
}

.ledger td:nth-child(-n+2) {
  text-align: center;
}

.ledger tbody tr:nth-child(n) td:nth-child(-n+5) {
  border-right-width: 1px;
}

.ledger td:nth-child(3) {
  color: #1a1af0;
}

.ledger td:nth-child(n+7) {
  font: 11px/14px "Liberation Sans", sans-serif;
  text-align: right;
}

.ledger tr:first-child td:nth-child(9) {
  font-weight: bold;
}

.watermark {
  position: absolute;
  right: 371px;
  top: 70px;
  width: 200px;
  height: 160px;
}

.watermark text {
  font: bold 56px "Liberation Serif", serif;
  fill: #9db7ec;
  stroke: #9db7ec;
  text-anchor: end;
}

.pageno {
  position: absolute;
  right: 38px;
  bottom: -24px;
  z-index: 1;
}

.torn {
  display: block;
  width: 100%;
  height: 32px;
  margin-top: -3px;
  fill: #fff;
  stroke: #666;
}

/* form parts */
.combo {
  position: relative;
  display: block;
  height: 21px;
  border: 1px solid #7a9fcd;
  background: #fff;
}

.combo select, .combo input {
  display: block;
  appearance: none;
  width: 100%;
  height: 100%;
  padding: 0 20px 0 4px;
  outline: 0;
}

.combo::after {
  content: "";
  position: absolute;
  top: 0;
  right: 0;
  width: 17px;
  height: 100%;
  background: #adc6e5;
}

.combo::before {
  content: "";
  position: absolute;
  z-index: 1;
  top: 8px;
  right: 5px;
  border: 4px solid transparent;
  border-top-color: #000;
  border-bottom: 0;
}

.combo.hot::after {
  background: #ffe59f;
}

.combo.lang {
  width: 99px;
}

.tick {
  display: flex;
  align-items: center;
  gap: 6px;
}

.tick input {
  appearance: none;
  width: 13px;
  height: 13px;
  border: 1px solid #222;
  background: #fff;
}

.btn {
  display: flex;
  align-items: center;
  width: 75px;
  height: 23px;
  padding: 0 4px;
  border: 1px solid #7a9fcd;
  background: #adc6e5;
}

.btn.wide {
  width: 126px;
  justify-content: center;
}

.btn svg {
  width: 16px;
  height: 16px;
}

.btn span {
  flex: 1;
  text-align: center;
}

.btn:disabled {
  background: #ccdcf0;
  color: #7f8893;
}

.actions {
  display: flex;
  align-items: center;
  gap: 5px;
  height: 44px;
  padding: 2px 9px 0 2px;
}

.actions .tick {
  margin-right: 1px;
}

.statusbar {
  display: grid;
  grid-template-columns: 244px 228px 124px 542fr 181px 31px 32px 37px 36px 53px 63px;
  gap: 2px;
  height: 6px;
  padding: 2px 0 0 2px;
  background: #adc6e5;
}

.statusbar span {
  border: 1px solid #7a9fcd;
  border-bottom: 0;
}

/* dialog */
.dialog {
  position: absolute;
  left: 494px;
  top: 174px;
  width: 612px;
  border: 1px solid #6595c7;
  background: #ccdcf0;
  box-shadow: 0 1px 4px rgba(0, 0, 0, 0.5);
}

.dlg-title {
  display: flex;
  align-items: center;
  height: 30px;
  padding: 0 6px 0 2px;
  background: #6595c7;
}

.dlg-title h2 {
  flex: 1;
  color: #fff;
  font: 12px/20px Roboto, sans-serif;
}

.dlg-title button {
  width: 22px;
  text-align: right;
  font: bold 12px/20px "DejaVu Sans", sans-serif;
}

.dlg-body {
  padding: 3px 9px 9px;
}

.stat-row {
  display: flex;
  align-items: center;
  height: 21px;
}

.stat-row label {
  width: 79px;
}

.stat {
  flex: 1;
}

.stat::after {
  background: #e5cc80;
}

.stat select {
  color: #fff;
  background: linear-gradient(#0078d7, #0078d7) 3px 2px / 94px 14px no-repeat;
  padding-bottom: 2px;
}

.options {
  position: absolute;
  z-index: 2;
  left: -1px;
  right: -3px;
  top: 20px;
  border: 1px solid #7a9fcd;
  background: #fff;
}

.options li {
  height: 15px;
  padding-left: 2px;
  line-height: 15px;
}

.options .on {
  background: #0078d7;
  color: #fff;
}

.marker {
  position: absolute;
  z-index: 3;
  left: -7px;
  top: 15px;
  width: 113px;
  height: 23px;
  border: 2px solid #c00000;
  box-shadow: 3px 3px 4px rgba(0, 0, 0, 0.4);
}

fieldset {
  margin: 6px 0 11px;
  padding: 6px 9px 6px 8px;
  border: 1px solid #7a9fcd;
}

legend {
  margin-left: -4px;
  padding: 0 3px;
  font-weight: bold;
}

.field-row {
  display: flex;
  align-items: center;
  height: 23px;
}

.field-row label:first-child {
  width: 70px;
}

.period-box {
  width: 224px;
}

.cur-label {
  width: 65px;
  padding-left: 14px;
}

.cur {
  width: 95px;
}

.date {
  width: 88px;
}

.to-label {
  width: 42px;
  padding-left: 16px;
}

.date.to {
  width: 94px;
}

.grid {
  display: flex;
  margin: 10px 0 5px 1px;
  border: 2px solid #7a9fcd;
  background: #fff;
}

.grid table {
  flex: 1;
  table-layout: fixed;
  border-collapse: separate;
  border-spacing: 0;
}

.g-check {
  width: 56px;
}

.g-acc {
  width: 142px;
}

.g-level {
  width: 83px;
}

.grid th {
  position: relative;
  height: 20px;
  padding: 0 12px 0 0;
  border-right: 1px solid #7a9fcd;
  background: #adc6e5;
  font-weight: normal;
}

.grid th svg {
  position: absolute;
  right: 1px;
  top: 7px;
  width: 10px;
  height: 8px;
}

.grid td {
  height: 20px;
  padding: 0 4px;
  border-right: 1px dotted #aaa;
  border-bottom: 1px dotted #aaa;
}

.grid td:first-child, .grid td:last-child {
  text-align: center;
}

.grid .soft {
  appearance: none;
  display: inline-block;
  vertical-align: middle;
  width: 12px;
  height: 12px;
  border: 2px solid #e9f0f8;
  outline: 1px solid #adc6e5;
  background: linear-gradient(135deg, #b9bec5, #fff);
}

.grid .filter td {
  padding: 0 3px;
  background: #ffffdf;
  text-align: left;
  line-height: 0;
}

.filter b {
  padding-left: 2px;
  font-weight: normal;
}

.op {
  display: inline-block;
  width: 12px;
  height: 12px;
  border: 1px solid #2b2b70;
  background: #6666d0;
  box-shadow: inset 0 0 0 2px #fff;
}

.tri {
  display: inline-block;
  width: 12px;
  height: 12px;
  margin-left: 14px;
  border: 1px solid #2b5d80;
  background: linear-gradient(135deg, #16506f, #55c1df);
  box-shadow: inset 0 0 0 1px #d8e6ee;
}

.grid-scroll {
  width: 17px;
}

.grid-scroll button {
  height: 20px;
  background: #adc6e5;
  line-height: 8px;
}

.grid-scroll .thumb {
  height: 7px;
  margin-bottom: auto;
  background: #adc6e5;
}

.dlg-actions {
  display: flex;
  gap: 9px;
}

.btn.clear {
  width: 87px;
  justify-content: center;
}
```
